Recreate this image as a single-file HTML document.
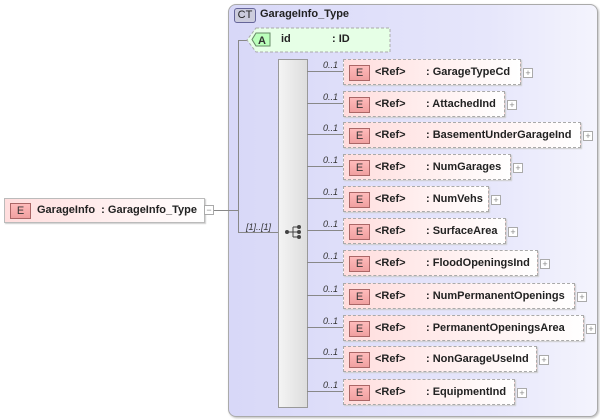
<!DOCTYPE html>
<html><head><style>
body{margin:0;width:600px;height:420px;background:#fff;position:relative;overflow:hidden;font-family:"Liberation Sans",sans-serif;font-size:11px;font-weight:bold;color:#222}
.a{position:absolute}
.ct{left:228px;top:4px;width:368px;height:411px;border:1px solid #aaa;border-radius:8px;background:linear-gradient(90deg,#d8d8f8,#e6e6fb 70%,#f4f4fd);box-shadow:1px 1px 2px #bbb}
.badge{position:absolute;width:19px;height:14px;border:1px solid #a66;background:linear-gradient(#fbb,#f0a0a0);font-weight:normal;font-size:11px;text-align:center;line-height:14px;color:#333}
.el{position:absolute;height:24px;border:1px dashed #aaa;background:linear-gradient(90deg,#fdd,#fff);box-shadow:1px 1px 1px #ccc}
.el .badge{left:5px;top:5px}
.el .r{position:absolute;left:31px;top:6px;font-weight:bold}
.el .n{position:absolute;left:82px;top:6px;white-space:nowrap}
.plus{position:absolute;width:8px;height:8px;border:1px solid #aaa;background:#fff;font-size:9px;line-height:8px;text-align:center;color:#888;font-weight:normal}
.h{position:absolute;height:1px;background:#888}
.v{position:absolute;width:1px;background:#888}
.m{position:absolute;font-size:9px;font-style:italic;font-weight:normal;color:#333}
</style></head><body>
<div class="a ct"></div>
<div class="a" style="left:234px;top:8px;width:20px;height:13px;border:1px solid #669;border-radius:3px;background:#ccd;font-weight:normal;text-align:center;line-height:13px;font-size:11px">CT</div>
<div class="a" style="left:260px;top:8px">GarageInfo_Type</div>

<div class="el" style="left:4px;top:198px;width:199px;height:23px;border:1px solid #bbb;background:linear-gradient(90deg,#fdd,#fff)"><div class="badge" style="left:5px;top:4px">E</div><div class="a" style="left:32px;top:5px">GarageInfo&nbsp; : GarageInfo_Type</div></div>
<div class="plus" style="left:204px;top:205px">−</div>
<div class="h" style="left:214px;top:210px;width:24px"></div>
<div class="v" style="left:238px;top:40px;height:193px"></div>
<div class="h" style="left:238px;top:40px;width:12px"></div>
<div class="h" style="left:238px;top:232px;width:40px"></div>
<div class="m" style="left:246px;top:222px">[1]..[1]</div>

<svg class="a" style="left:246px;top:27px" width="146" height="27"><path d="M10 1H144V25H10L1 13Z" fill="#e6ffe6" stroke="#aaa" stroke-dasharray="3,2"/><path d="M10 6H24V19H10L6 12.5Z" fill="#bfb" stroke="#686"/><text x="12" y="17" font-size="11" font-family="Liberation Sans" fill="#333">A</text></svg>
<div class="a" style="left:281px;top:33px">id</div>
<div class="a" style="left:332px;top:33px">: ID</div>

<div class="a" style="left:278px;top:59px;width:28px;height:347px;border:1px solid #999;background:linear-gradient(90deg,#f4f4f4,#ddd)"></div>
<svg class="a" style="left:284px;top:224px" width="20" height="18"><circle cx="3" cy="8" r="2" fill="#444"/><path d="M3 8H9M9 3V13M9 3H15M9 8H15M9 13H15" stroke="#444" fill="none"/><circle cx="15" cy="3" r="2" fill="#444"/><circle cx="15" cy="8" r="2" fill="#444"/><circle cx="15" cy="13" r="2" fill="#444"/></svg>

<div id="rows"></div>
<script>
var d=[["GarageTypeCd",59,176],["AttachedInd",91,160],["BasementUnderGarageInd",122,236],["NumGarages",154,166],["NumVehs",186,144],["SurfaceArea",218,161],["FloodOpeningsInd",250,193],["NumPermanentOpenings",283,230],["PermanentOpeningsArea",315,239],["NonGarageUseInd",346,192],["EquipmentInd",379,170]];
var h="";d.forEach(function(r){var y=r[1],w=r[2];
h+='<div class="h" style="left:307px;top:'+(y+12)+'px;width:36px"></div>';
h+='<div class="m" style="left:323px;top:'+(y+1)+'px">0..1</div>';
h+='<div class="el" style="left:343px;top:'+y+'px;width:'+w+'px"><div class="badge">E</div><div class="r">&lt;Ref&gt;</div><div class="n">: '+r[0]+'</div></div>';
h+='<div class="plus" style="left:'+(343+w+4)+'px;top:'+(y+9)+'px">+</div>';});
document.getElementById("rows").innerHTML=h;
</script>
</body></html>
